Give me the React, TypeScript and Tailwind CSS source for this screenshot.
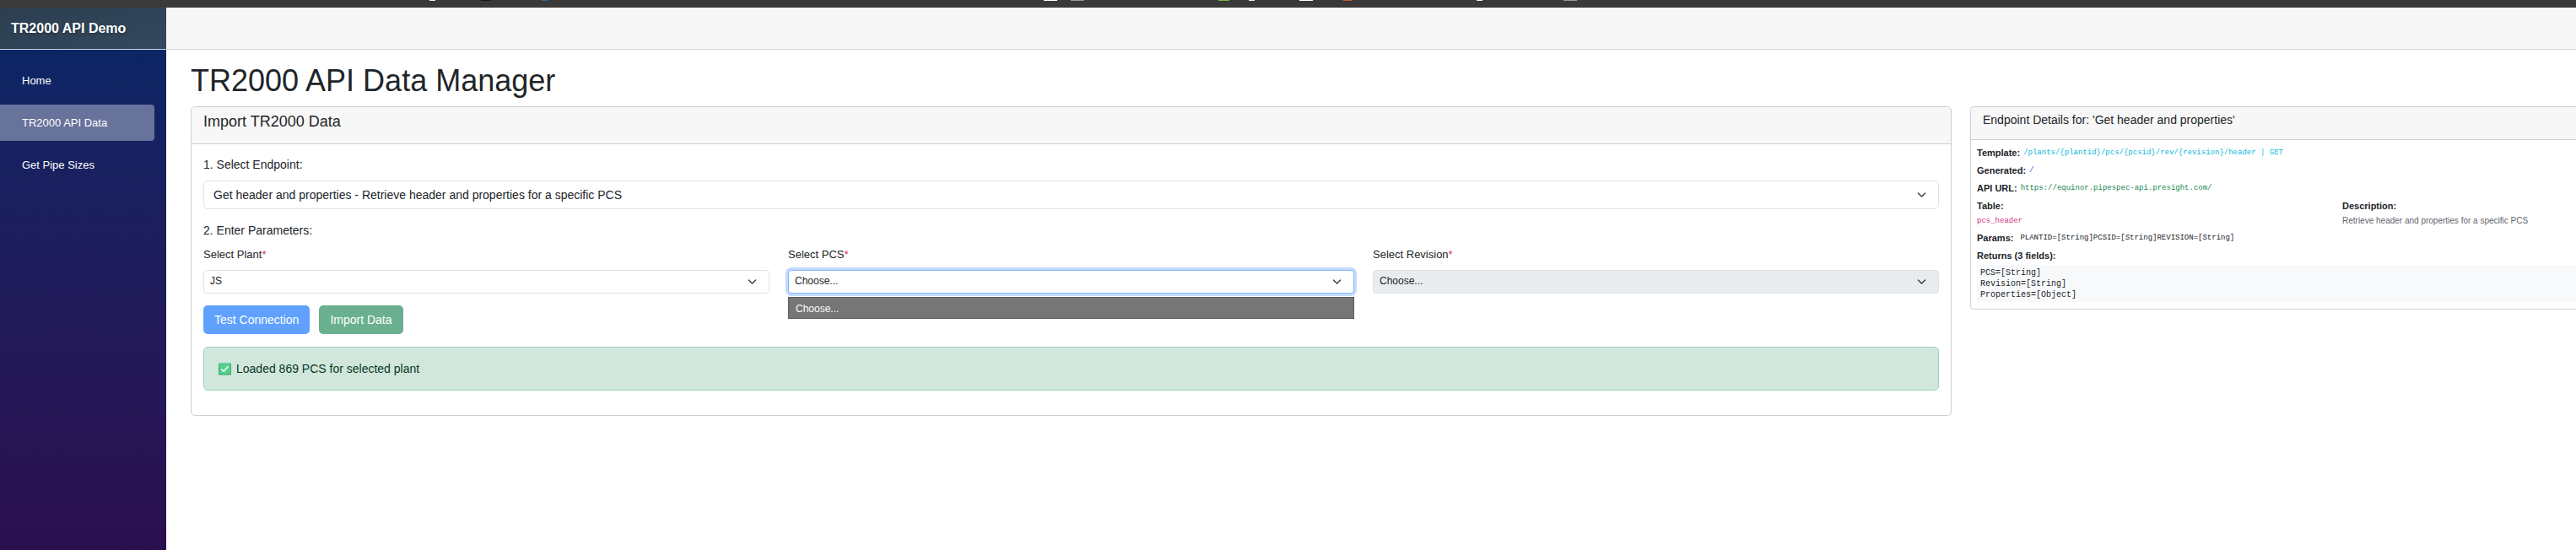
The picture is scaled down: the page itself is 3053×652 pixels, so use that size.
import { useState, type ReactNode, type SelectHTMLAttributes } from "react";
import clsx from "clsx";

const navItems = [
  { label: "Home", active: false },
  { label: "TR2000 API Data", active: true },
  { label: "Get Pipe Sizes", active: false },
];

const returnFields = ["PCS=[String]", "Revision=[String]", "Properties=[Object]"];

const taskbarMarks = [
  { x: 509, w: 7, fill: "#f0f0f0" },
  { x: 570, w: 12, fill: "#0d1a2b" },
  { x: 642, w: 7, fill: "#2c6fa8" },
  { x: 1237, w: 16, fill: "#ffffff" },
  { x: 1269, w: 16, fill: "#9a9a9a" },
  { x: 1444, w: 13, fill: "#7fb23c" },
  { x: 1480, w: 7, fill: "#f0f0f0" },
  { x: 1540, w: 16, fill: "#ffffff" },
  { x: 1592, w: 10, fill: "#c65a2c" },
  { x: 1750, w: 7, fill: "#f0f0f0" },
  { x: 1853, w: 16, fill: "#9a9a9a" },
];

function Chevron() {
  return (
    <svg
      viewBox="0 0 16 16"
      className="pointer-events-none absolute top-1/2 right-[15px] h-[11px] w-[11px] -translate-y-1/2"
      fill="none"
      stroke="#343a40"
      strokeWidth="2"
      strokeLinecap="round"
      strokeLinejoin="round"
      aria-hidden="true"
    >
      <path d="m2 5 6 6 6-6" />
    </svg>
  );
}

type SelectProps = SelectHTMLAttributes<HTMLSelectElement> & { large?: boolean; open?: boolean };

function Select({ large, open, children, ...rest }: SelectProps) {
  return (
    <div className="relative">
      <select
        {...rest}
        className={clsx(
          "block w-full appearance-none border text-[#212529] outline-none disabled:bg-[#e9ecef] disabled:opacity-100",
          large ? "h-[34px] rounded-[5px] px-[11px] text-sm" : "h-7 rounded px-[7px] pb-0.5 text-xs",
          open ? "border-[#86b7fe] ring-3 ring-[#c2dbfe]" : "border-[#dee2e6]",
          !rest.disabled && "bg-white",
        )}
      >
        {children}
      </select>
      <Chevron />
    </div>
  );
}

function Param({ id, label, children }: { id: string; label: string; children: ReactNode }) {
  return (
    <div className="relative">
      <label htmlFor={id} className="mb-[9px] block text-[13px] leading-[19px]">
        {label}
        <span className="text-[#dc3545]">*</span>
      </label>
      {children}
    </div>
  );
}

function CheckMark() {
  return (
    <svg viewBox="0 0 16 16" className="h-[15px] w-[15px]" aria-hidden="true">
      <rect x="0" y="0.5" width="16" height="15" rx="1" fill="#3da873" />
      <rect x="1" y="1" width="14" height="13" rx="0.5" fill="#55d08c" />
      <path d="m3.5 8 3 3 6-6.5" fill="none" stroke="#fff" strokeWidth="1.5" />
    </svg>
  );
}

function Sidebar() {
  return (
    <aside className="flex w-[197px] shrink-0 flex-col bg-linear-to-b from-[#052767] to-[#2b0f50]">
      <div className="flex h-[50px] items-center border-b border-[#cdd5e3] bg-linear-to-br from-[#2c3e50] to-[#34495e] pl-[13px]">
        <a href="#home" className="text-base font-bold text-white text-shadow-md">
          TR2000 API Demo
        </a>
      </div>
      <nav className="flex flex-col gap-[7px] pt-[15px] pr-3.5">
        {navItems.map((item) => (
          <a
            key={item.label}
            href="#nav"
            className={clsx(
              "flex h-[43px] items-center rounded-r pl-[26px] text-[13px] text-white",
              item.active && "bg-[#68739c]",
            )}
          >
            {item.label}
          </a>
        ))}
      </nav>
    </aside>
  );
}

function ImportCard() {
  const [endpoint, setEndpoint] = useState("header");
  const [plant, setPlant] = useState("JS");
  return (
    <section className="min-w-0 rounded-[5px] border border-[#cfcfcf]">
      <h2 className="rounded-t border-b border-[#cfcfcf] bg-[#f7f7f7] px-3.5 pt-[7px] pb-[15px] text-lg leading-[21px]">
        Import TR2000 Data
      </h2>
      <div className="px-3.5 pt-3.5 pb-[29px]">
        <label htmlFor="endpoint" className="mb-2 block text-sm leading-[21px]">
          1. Select Endpoint:
        </label>
        <Select id="endpoint" large value={endpoint} onChange={(e) => setEndpoint(e.target.value)}>
          <option value="header">
            Get header and properties - Retrieve header and properties for a specific PCS
          </option>
        </Select>
        <p className="mt-[15px] mb-2 text-sm leading-[21px]">2. Enter Parameters:</p>
        <div className="grid grid-cols-3 gap-[22px]">
          <Param id="plant" label="Select Plant">
            <Select id="plant" value={plant} onChange={(e) => setPlant(e.target.value)}>
              <option>JS</option>
            </Select>
          </Param>
          <Param id="pcs" label="Select PCS">
            <Select id="pcs" open>
              <option>Choose...</option>
            </Select>
            <div
              role="listbox"
              aria-label="Select PCS"
              className="absolute inset-x-0 top-full mt-1 border border-[#5a5a5a] bg-[#767676]"
            >
              <div role="option" aria-selected="true" className="px-2 pt-1 pb-0.5 text-xs leading-[18px] text-white">
                Choose...
              </div>
            </div>
          </Param>
          <Param id="revision" label="Select Revision">
            <Select id="revision" disabled>
              <option>Choose...</option>
            </Select>
          </Param>
        </div>
        <div className="mt-3.5 flex gap-[11px]">
          <button type="button" className="h-[34px] rounded-[5px] bg-[#60a1fe] px-[13px] text-sm text-white">
            Test Connection
          </button>
          <button type="button" className="h-[34px] rounded-[5px] bg-[#6ab090] px-[13px] text-sm text-white">
            Import Data
          </button>
        </div>
        <div
          role="status"
          className="mt-[15px] flex h-[52px] items-center gap-1.5 rounded-[5px] border border-[#a3cfbb] bg-[#d1e7dd] pl-[17px] text-sm text-[#0a3622]"
        >
          <CheckMark />
          Loaded 869 PCS for selected plant
        </div>
      </div>
    </section>
  );
}

function DetailRow({ label, children }: { label: string; children?: ReactNode }) {
  return (
    <div className="flex h-[21px] items-center gap-1">
      <strong>{label}</strong>
      {children}
    </div>
  );
}

const mono = "font-['Liberation_Mono',monospace] text-[9px]";

function DetailsCard() {
  return (
    <section className="min-w-0 rounded-l-[5px] border border-r-0 border-[#cfcfcf]">
      <h2 className="rounded-tl border-b border-[#cfcfcf] bg-[#f7f7f7] pt-[5px] pb-3 pl-3.5 text-sm leading-[21px]">
        Endpoint Details for: 'Get header and properties'
      </h2>
      <div className="pt-[5px] pb-2 pl-[7px] text-[11px]">
        <DetailRow label="Template:">
          <code className={clsx(mono, "text-[#0db8dc]")}>
            {"/plants/{plantid}/pcs/{pcsid}/rev/{revision}/header | GET"}
          </code>
        </DetailRow>
        <DetailRow label="Generated:">
          <code className={clsx(mono, "text-[#0d6efd]")}>/</code>
        </DetailRow>
        <DetailRow label="API URL:">
          <code className={clsx(mono, "text-[#198754]")}>https://equinor.pipespec-api.presight.com/</code>
        </DetailRow>
        <div className="mb-[3px] grid grid-cols-[433fr_277fr]">
          <div>
            <DetailRow label="Table:" />
            <code className={clsx(mono, "block leading-[14px] text-[#d63384]")}>pcs_header</code>
          </div>
          <div>
            <DetailRow label="Description:" />
            <p className="text-[10px] leading-[14px] text-[#5f656b]">
              Retrieve header and properties for a specific PCS
            </p>
          </div>
        </div>
        <DetailRow label="Params:">
          <code className={clsx(mono, "pl-1")}>PLANTID=[String]PCSID=[String]REVISION=[String]</code>
        </DetailRow>
        <DetailRow label="Returns (3 fields):" />
        <ul className="bg-[#f8f9fa] pt-[3px] pb-0.5 pl-1 font-['Liberation_Mono',monospace] text-[10px] leading-[13px]">
          {returnFields.map((field) => (
            <li key={field}>{field}</li>
          ))}
        </ul>
      </div>
    </section>
  );
}

export default function App() {
  return (
    <div className="flex min-h-screen flex-col bg-white font-['Liberation_Sans',Arial,sans-serif] text-[#212529]">
      <div className="h-[9px] overflow-hidden bg-[#3a3a3a]">
        <svg width="1900" height="1" className="block" aria-hidden="true">
          {taskbarMarks.map((m) => (
            <rect key={m.x} x={m.x} y="0" width={m.w} height="1" fill={m.fill} />
          ))}
        </svg>
      </div>
      <div className="flex flex-1">
        <Sidebar />
        <div className="flex min-w-0 flex-1 flex-col">
          <header className="h-[50px] border-b border-[#d6d5d5] bg-[#f7f7f7]" />
          <main className="pt-4 pl-[29px]">
            <h1 className="mb-[9px] text-4xl leading-[42px]">TR2000 API Data Manager</h1>
            <div className="grid grid-cols-[2087fr_718fr] items-start gap-[22px]">
              <ImportCard />
              <DetailsCard />
            </div>
          </main>
        </div>
      </div>
    </div>
  );
}
